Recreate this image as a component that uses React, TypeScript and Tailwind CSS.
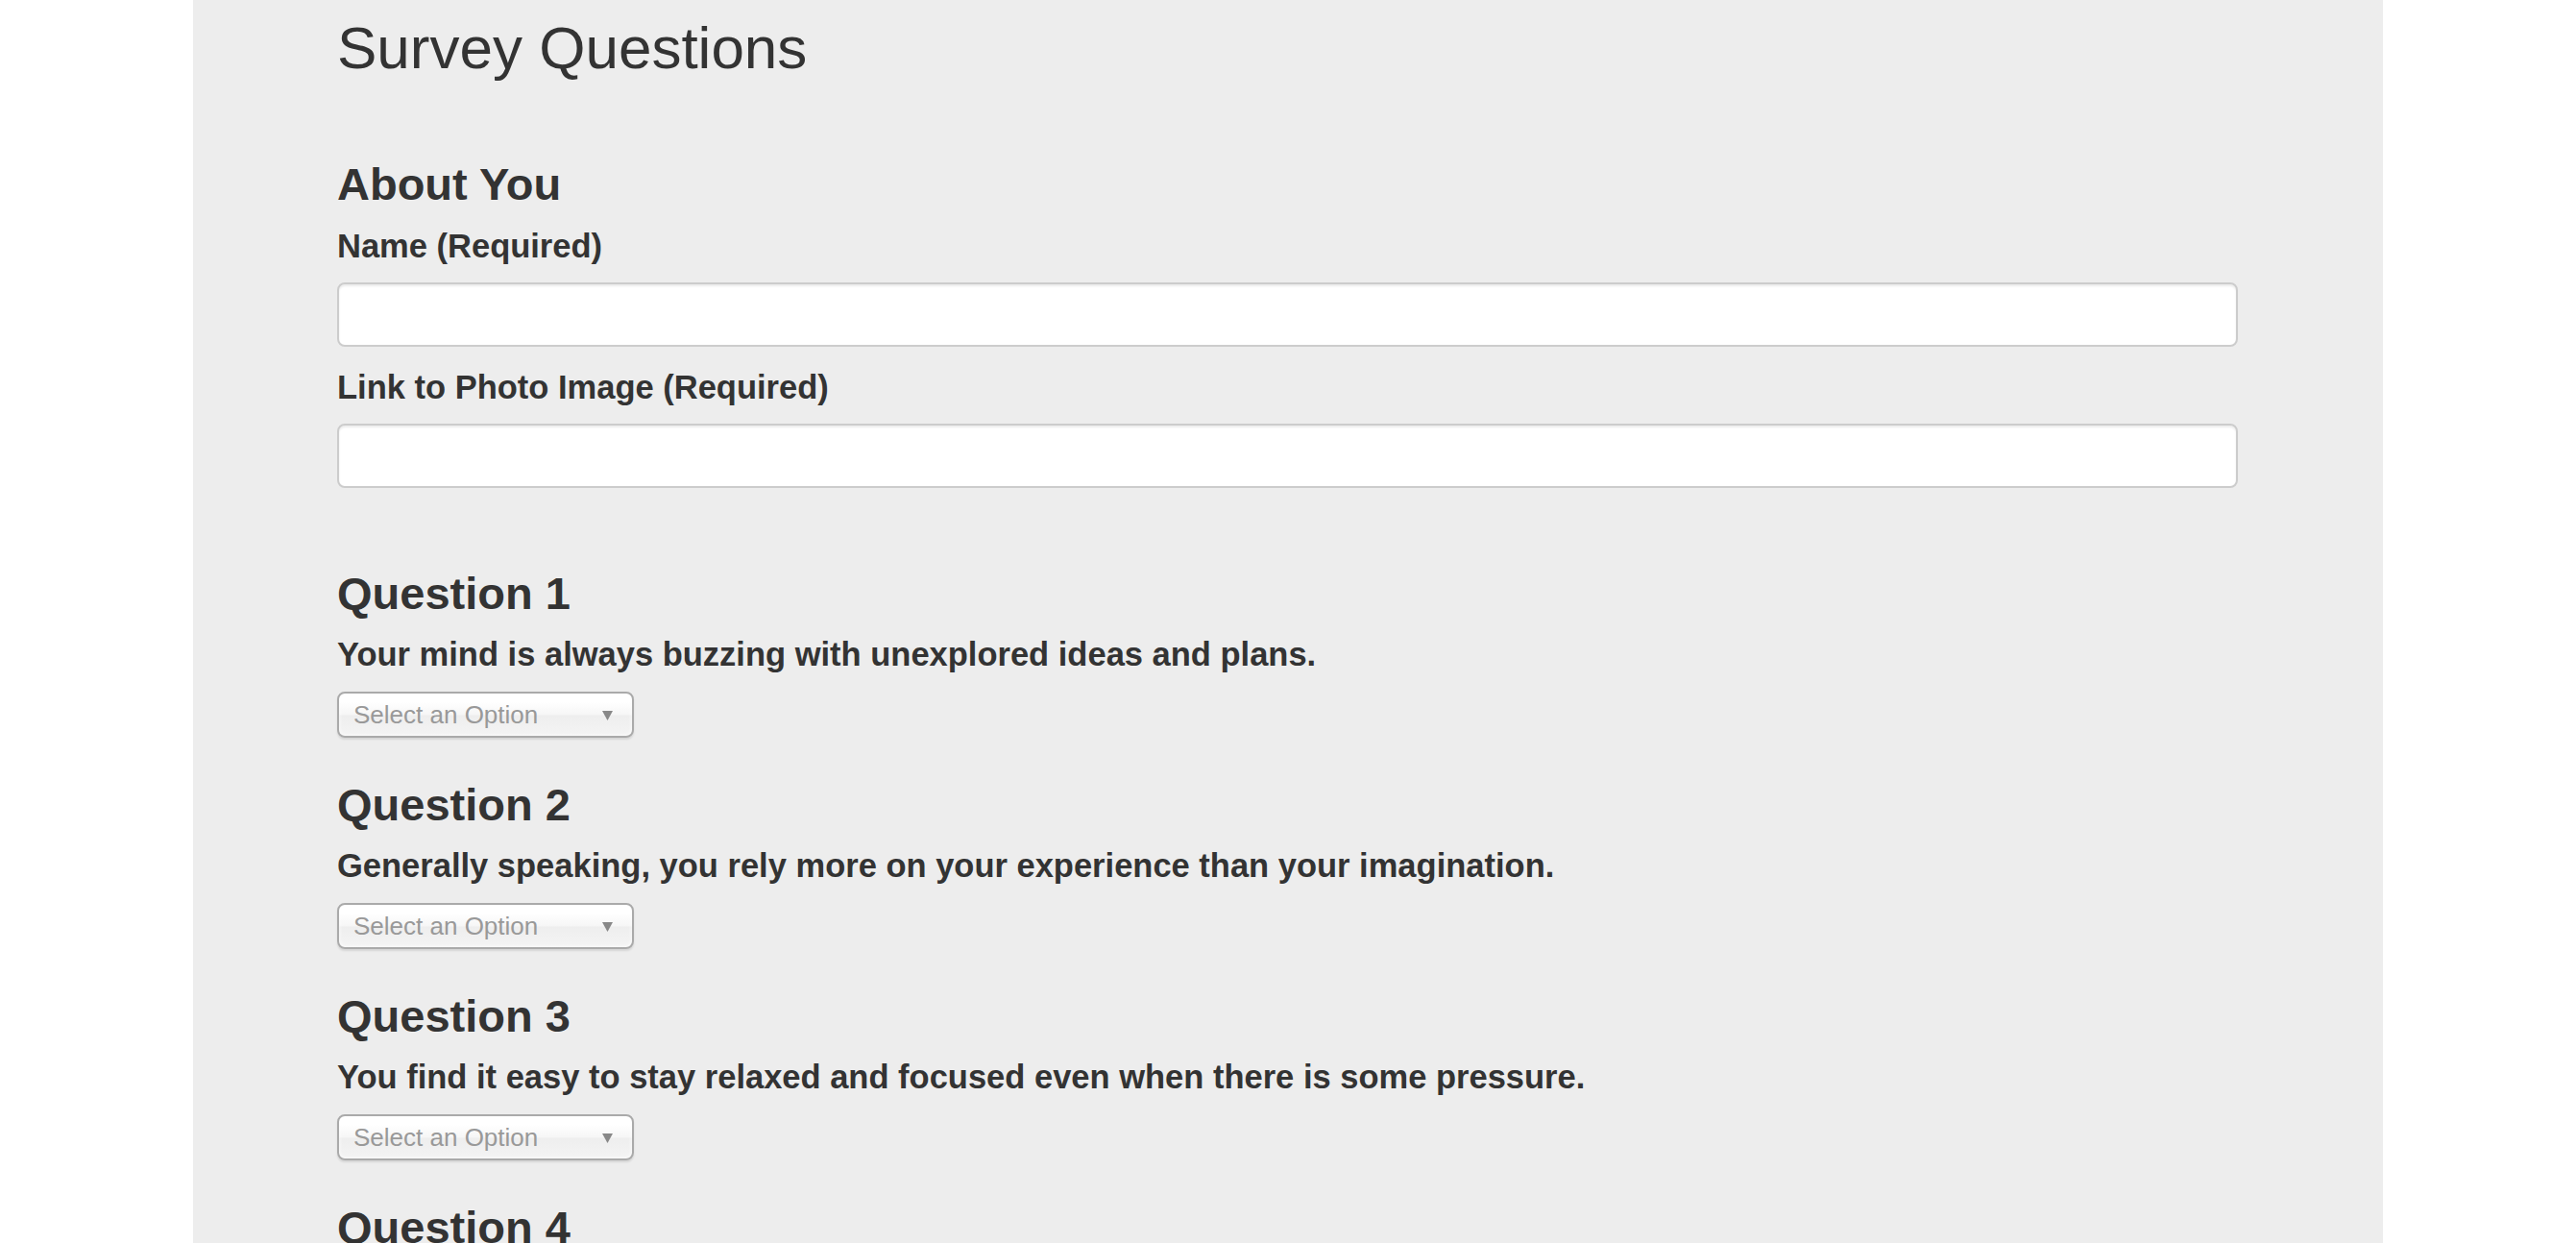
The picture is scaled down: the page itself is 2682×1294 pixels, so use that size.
const questions = [
  "Your mind is always buzzing with unexplored ideas and plans.",
  "Generally speaking, you rely more on your experience than your imagination.",
  "You find it easy to stay relaxed and focused even when there is some pressure.",
  "You rarely do something just out of sheer curiosity.",
];

const TextInput = () => (
  <input
    type="text"
    className="block w-full h-[67px] px-4 bg-white border-2 border-[#cccccc] rounded-[8px] shadow-[inset_0_2px_2px_rgba(0,0,0,0.075)] outline-none text-[28px]"
  />
);

const FakeSelect = () => (
  <div className="flex items-center justify-between w-[309px] h-[48px] pl-[15px] pr-[20px] border-2 border-[#aaaaaa] rounded-[8px] bg-[linear-gradient(#ffffff_20%,#f6f6f6_50%,#eeeeee_52%,#f4f4f4_100%)] shadow-[0_2px_2px_rgba(0,0,0,0.1),inset_0_0_4px_#ffffff]">
    <span className="text-[26px] leading-[30px] text-[#999999]">Select an Option</span>
    <svg width="11" height="10" viewBox="0 0 11 10" className="mt-[1px]">
      <path d="M0 0 H11 L5.5 10 Z" fill="#888888" />
    </svg>
  </div>
);

export default function App() {
  return (
    <div className="min-h-screen bg-white font-['Liberation_Sans',Arial,sans-serif] text-[#333333]">
      <div className="mx-auto w-[2280px] bg-[#ededed] pt-[14px] pb-[60px] pl-[150px] pr-[151px]">
        <h1 className="text-[62px] leading-[72px] font-normal">Survey Questions</h1>

        <h2 className="mt-[80px] text-[47px] leading-[52px] font-bold">About You</h2>
        <label className="block mt-[18px] text-[34.5px] leading-[40px] font-bold">Name (Required)</label>
        <div className="mt-[18px]">
          <TextInput />
        </div>
        <label className="block mt-[22px] text-[34.5px] leading-[40px] font-bold">
          Link to Photo Image (Required)
        </label>
        <div className="mt-[18px]">
          <TextInput />
        </div>

        <div className="mt-[84px] flex flex-col gap-[44px]">
          {questions.map((q, i) => (
            <div key={i}>
              <h2 className="text-[47px] leading-[52px] font-bold">Question {i + 1}</h2>
              <label className="block mt-[17px] text-[34.5px] leading-[40px] font-bold">{q}</label>
              <div className="mt-[19px]">
                <FakeSelect />
              </div>
            </div>
          ))}
        </div>
      </div>
    </div>
  );
}
